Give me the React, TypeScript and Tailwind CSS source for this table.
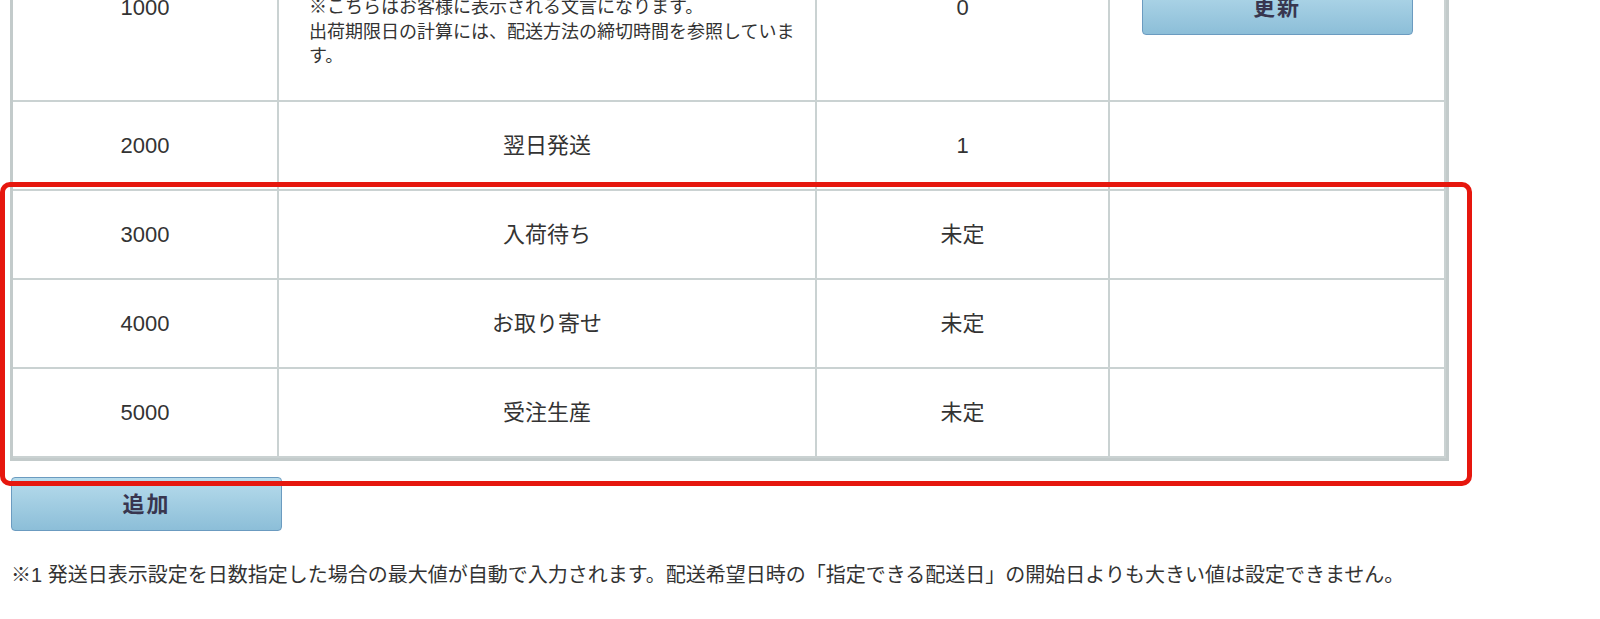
const rows = [
  { code: "2000", name: "翌日発送", days: "1" },
  { code: "3000", name: "入荷待ち", days: "未定" },
  { code: "4000", name: "お取り寄せ", days: "未定" },
  { code: "5000", name: "受注生産", days: "未定" },
];

function BlueButton({ label }: { label: string }) {
  return (
    <button className="w-[271px] h-[54px] rounded-[4px] border border-[#6b9bc0] bg-gradient-to-b from-[#b7dcec] to-[#8cbed8] text-[22px] font-bold tracking-[2px] text-[#38364f]">
      {label}
    </button>
  );
}

export default function App() {
  const cell =
    "flex items-center justify-center border-b-2 border-r-2 border-[#cad2d2]";
  return (
    <div
      className="relative -mt-[88px] pl-[10px] bg-white text-[#333] min-h-[707px]"
      style={{ fontFamily: '"Liberation Sans", "Noto Sans CJK JP", sans-serif' }}
    >
      <div className="w-[1439px] border-[3px] border-[#c3cbcb]">
        <div className="grid grid-cols-[266px_538px_293px_1fr] text-[22px]">
          {/* 1000 row, being edited */}
          <div className={`${cell} h-[187px]`}>1000</div>
          <div className={`${cell} h-[187px] justify-start pl-[30px] pr-[18px] text-[18px] leading-[24.5px]`}>
            <div>
              <p>当日発送</p>
              <p>&nbsp;</p>
              <p>※こちらはお客様に表示される文言になります。</p>
              <p>出荷期限日の計算には、配送方法の締切時間を参照しています。</p>
            </div>
          </div>
          <div className={`${cell} h-[187px]`}>0</div>
          <div className={`${cell} h-[187px] border-r-0`}>
            <BlueButton label="更新" />
          </div>

          {rows.map((r, i) => {
            const last = i === rows.length - 1;
            const b = last ? " border-b-0" : "";
            return [
              <div key={r.code + "a"} className={`${cell} h-[89px]${b}`}>{r.code}</div>,
              <div key={r.code + "b"} className={`${cell} h-[89px]${b}`}>{r.name}</div>,
              <div key={r.code + "c"} className={`${cell} h-[89px]${b}`}>{r.days}</div>,
              <div key={r.code + "d"} className={`${cell} h-[89px] border-r-0${b}`}></div>,
            ];
          })}
        </div>
      </div>

      <div className="mt-[16px] ml-px">
        <BlueButton label="追加" />
      </div>

      <p className="mt-[30px] ml-px text-[20px] leading-[28px]">
        ※1 発送日表示設定を日数指定した場合の最大値が自動で入力されます。配送希望日時の「指定できる配送日」の開始日よりも大きい値は設定できません。
      </p>

      {/* red annotation frame */}
      <div className="absolute left-0 top-[270px] w-[1472px] h-[304px] rounded-[10px] border-[5px] border-[#e6170e] pointer-events-none" />
    </div>
  );
}
